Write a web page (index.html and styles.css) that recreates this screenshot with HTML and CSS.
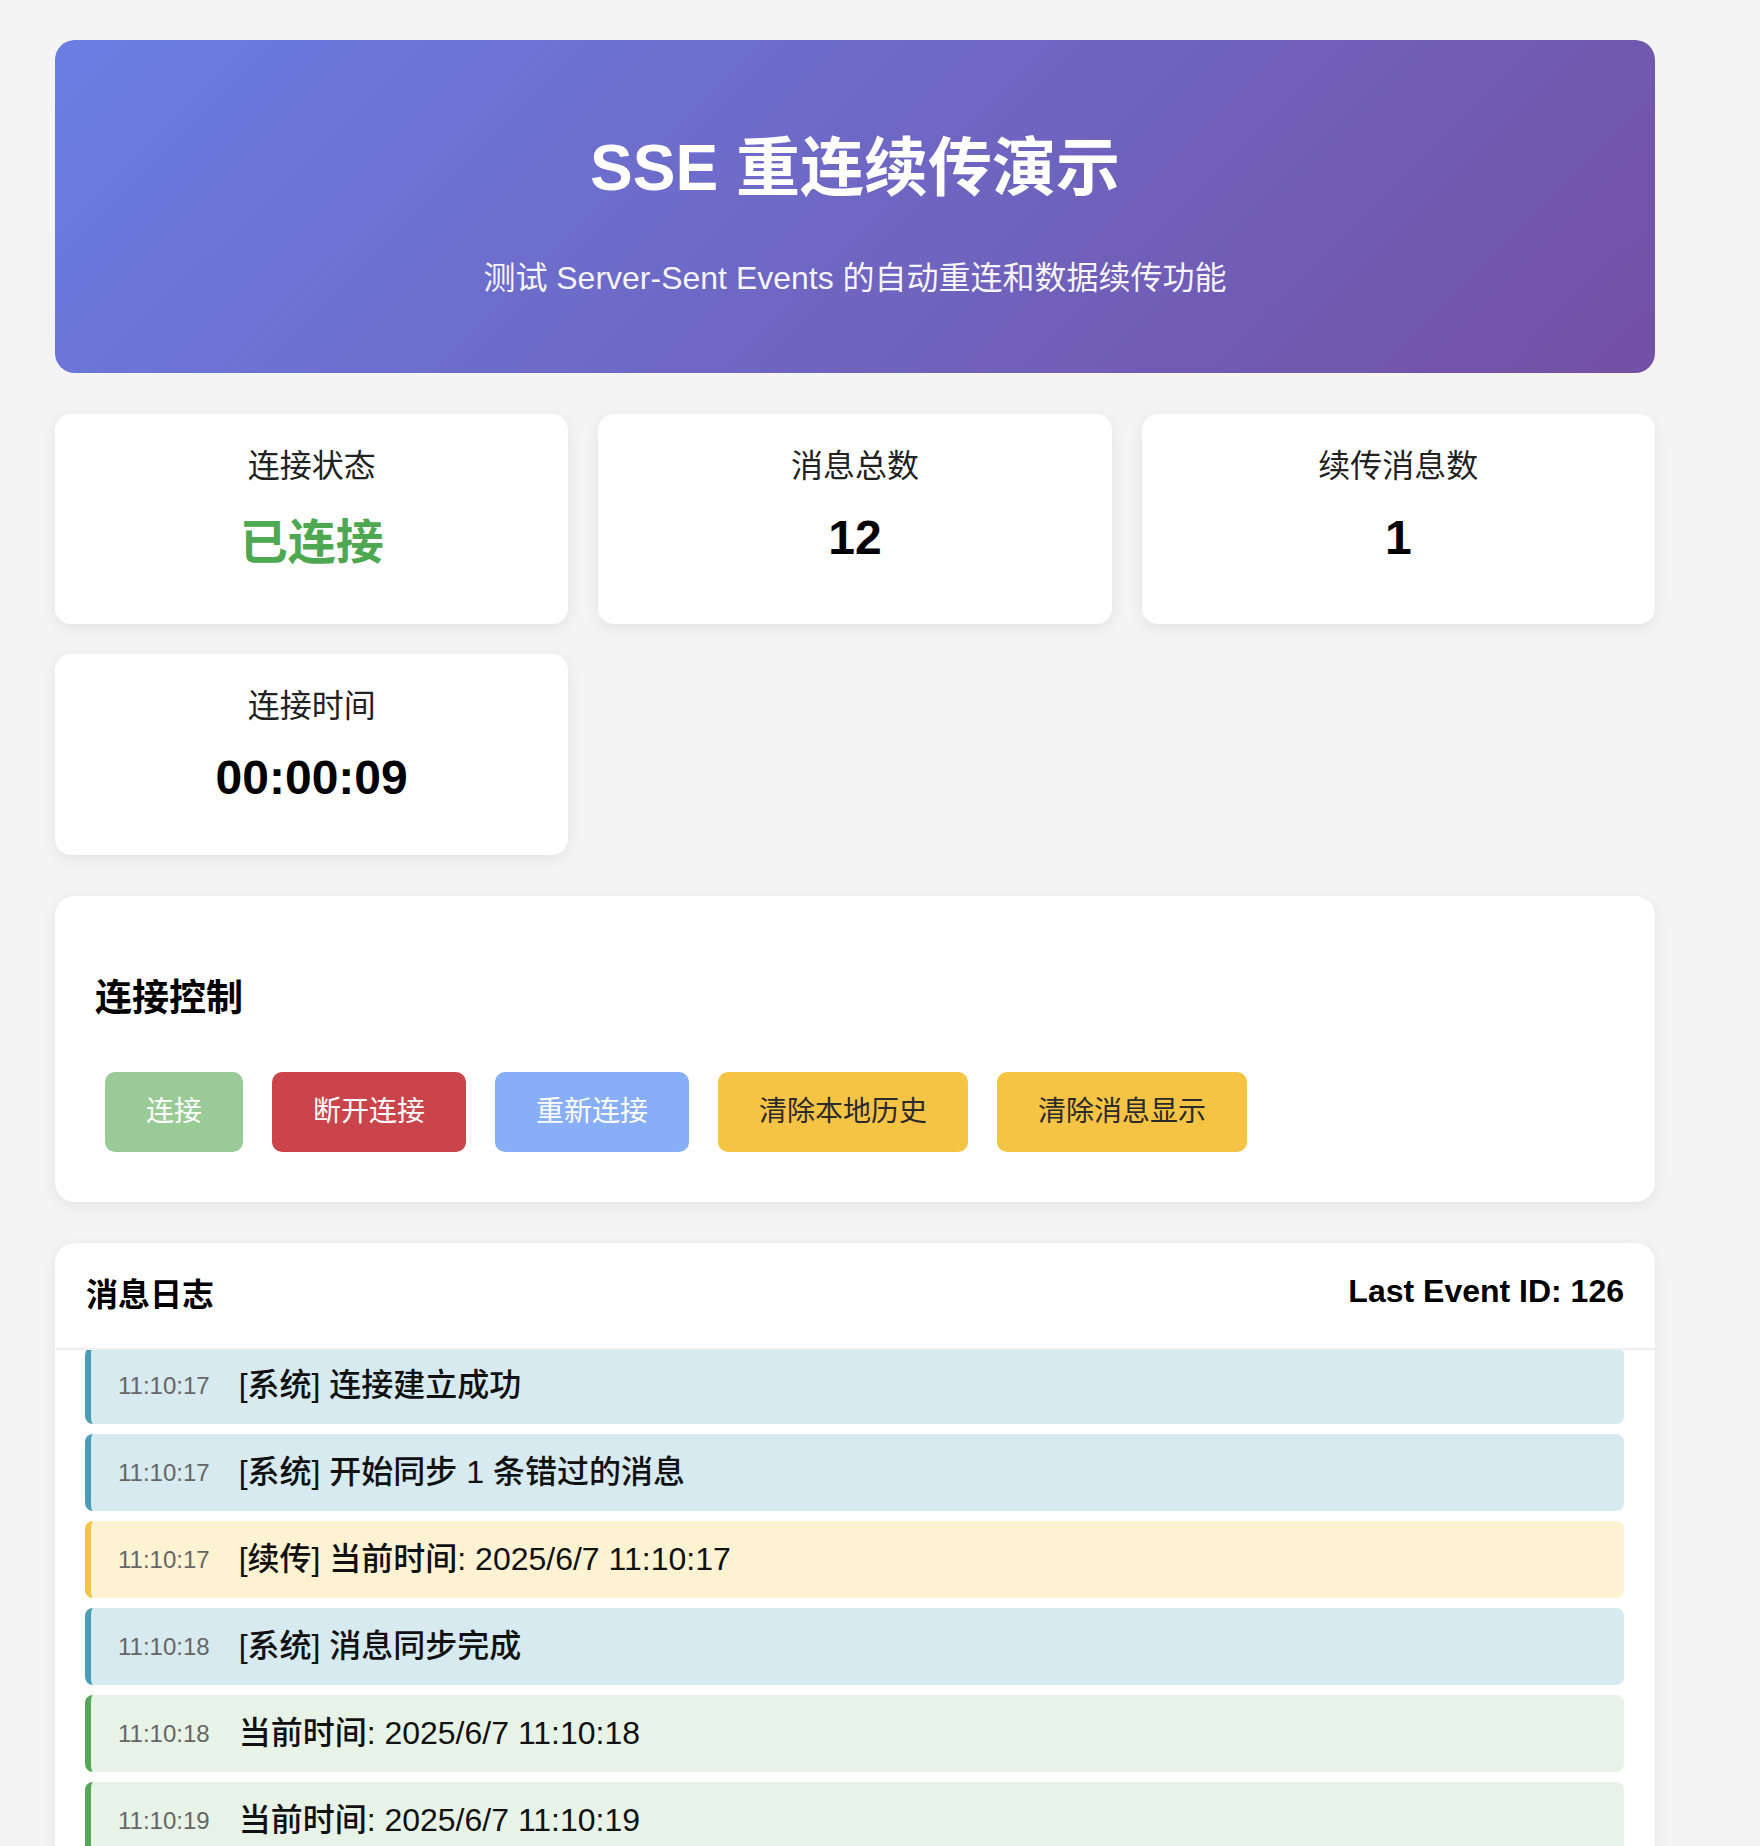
FILE: index.html
```html
<!DOCTYPE html>
<html lang="zh-CN">
  <head>
    <meta charset="UTF-8" />
    <meta name="viewport" content="width=device-width, initial-scale=1.0" />
    <title>SSE 重连续传演示</title>
    <link rel="stylesheet" href="styles.css">
  </head>
  <body>
    <div class="container">
      <div class="header">
        <h1>SSE 重连续传演示</h1>
        <p>测试 Server-Sent Events 的自动重连和数据续传功能</p>
      </div>

      <div class="stats">
        <div class="stat-card">
          <div class="stat-label">连接状态</div>
          <div class="stat-value status connected">已连接</div>
        </div>
        <div class="stat-card">
          <div class="stat-label">消息总数</div>
          <div class="stat-value">12</div>
        </div>
        <div class="stat-card">
          <div class="stat-label">续传消息数</div>
          <div class="stat-value">1</div>
        </div>
        <div class="stat-card">
          <div class="stat-label">连接时间</div>
          <div class="stat-value">00:00:09</div>
        </div>
      </div>

      <div class="panel controls-panel">
        <h3>连接控制</h3>
        <div class="controls">
          <button class="btn btn-connect" disabled>连接</button>
          <button class="btn btn-disconnect">断开连接</button>
          <button class="btn btn-reconnect" disabled>重新连接</button>
          <button class="btn btn-warning">清除本地历史</button>
          <button class="btn btn-warning">清除消息显示</button>
        </div>
      </div>

      <div class="panel messages-panel">
        <div class="messages-header">
          <h3>消息日志</h3>
          <span class="last-id">Last Event ID: 126</span>
        </div>
        <div class="messages">
          <div class="message system">
            <span class="time">11:10:17</span>
            <span class="text">[系统] 连接建立成功</span>
          </div>
          <div class="message system">
            <span class="time">11:10:17</span>
            <span class="text">[系统] 开始同步 1 条错过的消息</span>
          </div>
          <div class="message resumed">
            <span class="time">11:10:17</span>
            <span class="text">[续传] 当前时间: 2025/6/7 11:10:17</span>
          </div>
          <div class="message system">
            <span class="time">11:10:18</span>
            <span class="text">[系统] 消息同步完成</span>
          </div>
          <div class="message normal">
            <span class="time">11:10:18</span>
            <span class="text">当前时间: 2025/6/7 11:10:18</span>
          </div>
          <div class="message normal">
            <span class="time">11:10:19</span>
            <span class="text">当前时间: 2025/6/7 11:10:19</span>
          </div>
        </div>
      </div>
    </div>
  </body>
</html>
```

FILE: styles.css
```css
body {
  font-family: "Liberation Sans", "Noto Sans CJK SC", sans-serif;
  margin: 0;
  padding: 40px 0 0 55px;
  background-color: #f4f4f4;
  color: #000;
}

.container {
  width: 1600px;
}

.header {
  background: linear-gradient(135deg, #6a7ee3 0%, #7350a4 100%);
  color: white;
  border-radius: 20px;
  padding: 40px 40px;
  text-align: center;
}

.header h1 {
  margin: 43px 0;
  font-size: 64px;
  line-height: 90px;
  font-weight: bold;
}

.header p {
  margin: 32px 0;
  font-size: 32px;
  line-height: 45px;
  color: rgba(255, 255, 255, 0.95);
}

.stats {
  display: grid;
  grid-template-columns: repeat(3, 1fr);
  gap: 30px;
  margin-top: 41px;
}

.stat-card {
  background-color: white;
  border-radius: 16px;
  padding: 30px 20px 48px;
  text-align: center;
  box-shadow: 0 4px 16px rgba(0, 0, 0, 0.07);
}

.stat-label {
  font-size: 32px;
  line-height: 45px;
  color: #222;
  margin-bottom: 20px;
}

.stat-value {
  font-size: 48px;
  line-height: 58px;
  font-weight: bold;
}

.stat-value.status {
  line-height: 67px;
}

.stat-value.connected {
  color: #4ea852;
}

.panel {
  background-color: white;
  border-radius: 20px;
  box-shadow: 0 4px 16px rgba(0, 0, 0, 0.07);
  margin-top: 41px;
}

.controls-panel {
  padding: 40px;
}

.controls-panel h3 {
  margin: 37px 0;
  font-size: 37px;
  line-height: 52px;
}

.controls {
  display: flex;
  flex-wrap: wrap;
  gap: 29px;
  padding: 10px;
}

.btn {
  font-family: inherit;
  font-size: 28px;
  line-height: 40px;
  padding: 20px 41px;
  border: none;
  border-radius: 10px;
  color: white;
  cursor: pointer;
}

.btn-connect {
  background-color: #9aca96;
}

.btn-disconnect {
  background-color: #c9444b;
}

.btn-reconnect {
  background-color: #87aef6;
}

.btn-warning {
  background-color: #f6c445;
  color: #2a2a2a;
}

.messages-panel {
  overflow: hidden;
}

.messages-header {
  display: flex;
  justify-content: space-between;
  align-items: flex-start;
  padding: 30px 31px;
  border-bottom: 2px solid #eee;
}

.messages-header h3 {
  margin: 0;
  font-size: 32px;
  line-height: 45px;
}

.last-id {
  font-size: 32px;
  line-height: 37px;
  font-weight: bold;
}

.messages {
  display: flex;
  flex-direction: column;
  gap: 10px;
  padding: 0 31px 30px 30px;
  overflow: hidden;
}

.message {
  display: flex;
  align-items: center;
  padding: 16px 20px 16px 27px;
  border-left: 6px solid;
  border-radius: 8px;
}

.message:first-child {
  margin-top: -3px;
}

.message .time {
  font-size: 24px;
  line-height: 45px;
  color: #666;
  margin-right: 29px;
}

.message .text {
  font-size: 32px;
  line-height: 45px;
  font-weight: 500;
  color: #111;
}

.message.system {
  background-color: #d6eaef;
  border-color: #4b9db4;
}

.message.resumed {
  background-color: #fdf2d2;
  border-color: #f6c445;
}

.message.normal {
  background-color: #e8f3e7;
  border-color: #55a758;
}
```
